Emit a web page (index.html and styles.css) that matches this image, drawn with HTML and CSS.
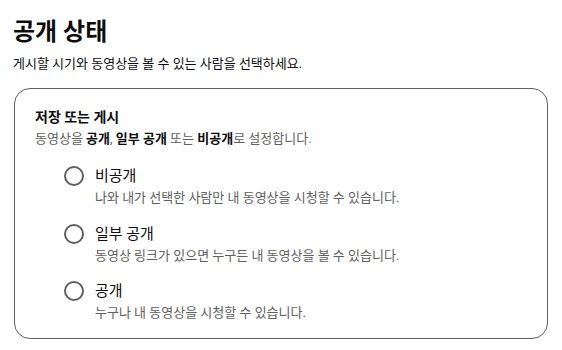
FILE: index.html
```html
<!DOCTYPE html>
<html lang="ko">
<head>
<meta charset="utf-8">
<link rel="stylesheet" href="styles.css">
</head>
<body>
<main class="page">
  <h1 class="title">공개 상태</h1>
  <p class="subtitle">게시할 시기와 동영상을 볼 수 있는 사람을 선택하세요.</p>
  <section class="card">
    <h2 class="card-title">저장 또는 게시</h2>
    <p class="card-desc">동영상을 <b>공개</b>, <b>일부 공개</b> 또는 <b>비공개</b>로 설정합니다.</p>
    <div class="options">
      <label class="option">
        <span class="radio"></span>
        <span class="option-text">
          <span class="option-label">비공개</span>
          <span class="option-desc">나와 내가 선택한 사람만 내 동영상을 시청할 수 있습니다.</span>
        </span>
      </label>
      <label class="option">
        <span class="radio"></span>
        <span class="option-text">
          <span class="option-label">일부 공개</span>
          <span class="option-desc">동영상 링크가 있으면 누구든 내 동영상을 볼 수 있습니다.</span>
        </span>
      </label>
      <label class="option">
        <span class="radio"></span>
        <span class="option-text">
          <span class="option-label">공개</span>
          <span class="option-desc">누구나 내 동영상을 시청할 수 있습니다.</span>
        </span>
      </label>
    </div>
  </section>
</main>
</body>
</html>
```
FILE: styles.css
```css
* { box-sizing: border-box; }
body {
  margin: 0;
  background: #fff;
  font-family: Roboto, "Noto Sans CJK KR", sans-serif;
  color: #0d0d0d;
}
.page {
  width: 562px;
  padding: 16px 14px 0 13px;
}
.title {
  margin: 0;
  font-size: 24px;
  line-height: 32px;
  font-weight: 700;
}
.subtitle {
  margin: 6px 0 0;
  font-size: 13px;
  line-height: 20px;
  color: #0d0d0d;
}
.card {
  margin-top: 14px;
  margin-left: 1px;
  border: 1px solid #606060;
  border-radius: 16px;
  padding: 18px 20px 0 20px;
  height: 251px;
}
.card-title {
  margin: 0;
  font-size: 14px;
  line-height: 20px;
  font-weight: 700;
}
.card-desc {
  margin: 3px 0 0;
  font-size: 13px;
  line-height: 18px;
  color: #606060;
}
.card-desc b { color: #0d0d0d; font-weight: 700; }
.options {
  display: flex;
  flex-direction: column;
  gap: 15.5px;
  margin-top: 17px;
  padding-left: 29px;
}
.option {
  display: flex;
  align-items: flex-start;
  gap: 11px;
}
.radio {
  flex: none;
  width: 20px;
  height: 20px;
  border: 2px solid #606060;
  border-radius: 50%;
  margin-top: 1px;
}
.option-text {
  display: flex;
  flex-direction: column;
}
.option-label {
  font-size: 15px;
  line-height: 22px;
}
.option-desc {
  margin-top: 2px;
  font-size: 13px;
  line-height: 18px;
  color: #606060;
}
```
